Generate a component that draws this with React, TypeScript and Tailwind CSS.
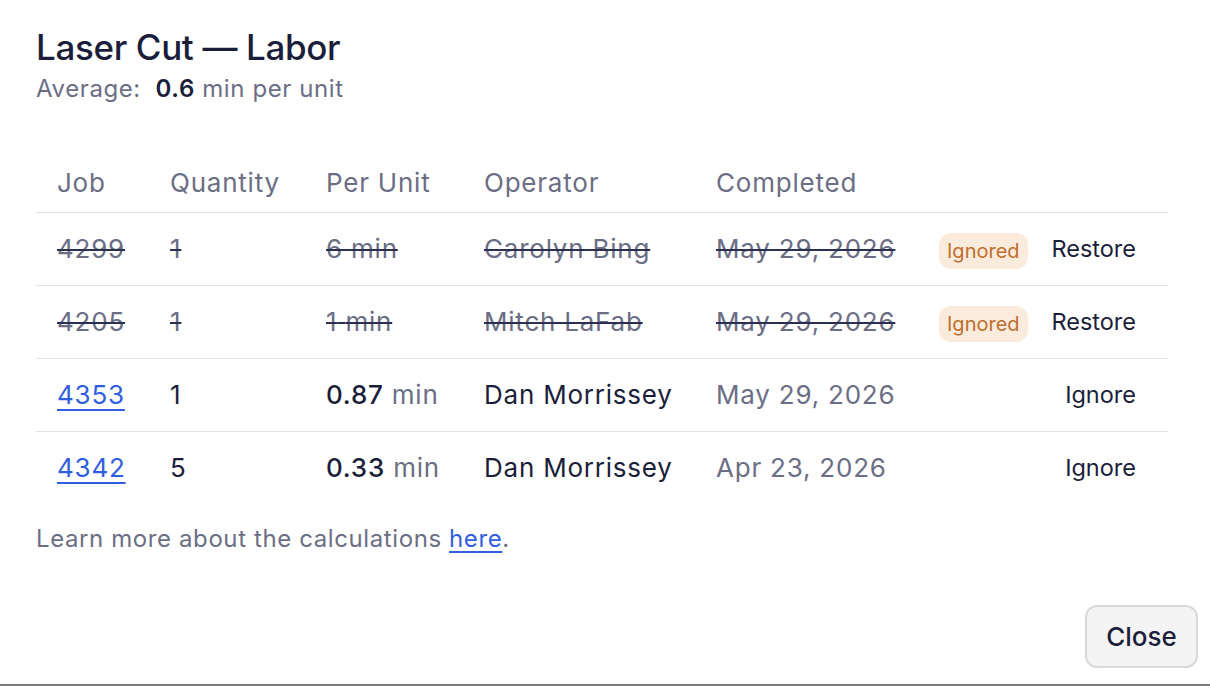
import React from "react";

type Row = {
  job: string;
  qty: string;
  perUnit: string;
  unit: string;
  operator: string;
  completed: string;
  ignored: boolean;
};

const rows: Row[] = [
  { job: "4299", qty: "1", perUnit: "6", unit: "min", operator: "Carolyn Bing", completed: "May 29, 2026", ignored: true },
  { job: "4205", qty: "1", perUnit: "1", unit: "min", operator: "Mitch LaFab", completed: "May 29, 2026", ignored: true },
  { job: "4353", qty: "1", perUnit: "0.87", unit: "min", operator: "Dan Morrissey", completed: "May 29, 2026", ignored: false },
  { job: "4342", qty: "5", perUnit: "0.33", unit: "min", operator: "Dan Morrissey", completed: "Apr 23, 2026", ignored: false },
];

const strike = "line-through decoration-[#2b3050] decoration-2 text-[#6b6e85]";

function App() {
  return (
    <div className="w-[1210px] h-[686px] bg-white border-b-2 border-[#7a7a7a] font-['Inter','Noto_Sans',sans-serif] text-[#1b1e3a] flex flex-col">
      <div className="px-9 pt-[25px]">
        <h1 className="text-[35px] font-medium leading-[44px] tracking-[-0.01em]">Laser Cut — Labor</h1>
        <p className="mt-[4px] text-[24px] leading-[32px] text-[#6b6e85] tracking-[0.025em]">
          Average:&nbsp; <span className="font-semibold text-[#1b1e3a]">0.6</span> min per unit
        </p>

        <table className="mt-[49px] w-[1132px] table-fixed border-collapse text-[26px] tracking-[0.03em]">
          <thead>
            <tr className="text-left text-[#6b6e85] h-[58px]">
              <th className="w-[113px] pl-[21px] font-normal">Job</th>
              <th className="w-[156px] pl-[21px] font-normal">Quantity</th>
              <th className="w-[158px] pl-[21px] font-normal">Per Unit</th>
              <th className="w-[232px] pl-[21px] font-normal">Operator</th>
              <th className="w-[223px] pl-[21px] font-normal">Completed</th>
              <th className="w-[114px] pl-[21px] font-normal"></th>
              <th className="font-normal"></th>
            </tr>
          </thead>
          <tbody>
            {rows.map((r) => (
              <tr key={r.job} className="h-[73px] border-t border-[#e3e3e6]">
                <td className="pl-[21px]">
                  {r.ignored ? (
                    <span className={strike}>{r.job}</span>
                  ) : (
                    <a href="#" className="text-[#2f5fe0] underline underline-offset-[5px] decoration-2">{r.job}</a>
                  )}
                </td>
                <td className="pl-[21px]">{r.ignored ? <span className={strike}>{r.qty}</span> : r.qty}</td>
                <td className="pl-[21px]">
                  {r.ignored ? (
                    <span className={strike}>
                      {r.perUnit} {r.unit}
                    </span>
                  ) : (
                    <span>
                      <span className="font-medium">{r.perUnit}</span>{" "}
                      <span className="text-[#6b6e85]">{r.unit}</span>
                    </span>
                  )}
                </td>
                <td className="pl-[21px]">{r.ignored ? <span className={strike}>{r.operator}</span> : r.operator}</td>
                <td className="pl-[21px]">
                  <span className={r.ignored ? strike : "text-[#6b6e85]"}>{r.completed}</span>
                </td>
                <td className="pl-[21px]">
                  {r.ignored && (
                    <span className="inline-flex items-center h-[36px] px-[8px] rounded-[12px] bg-[#fbebdc] text-[#bf6e2c] text-[20px] tracking-normal">
                      Ignored
                    </span>
                  )}
                </td>
                <td className="text-right pr-[32px] text-[23.5px] tracking-normal">
                  <button className="text-[#1b1e3a]">{r.ignored ? "Restore" : "Ignore"}</button>
                </td>
              </tr>
            ))}
          </tbody>
        </table>

        <p className="mt-[20px] text-[24px] leading-[30px] text-[#6b6e85] tracking-[0.025em]">
          Learn more about the calculations{" "}
          <a href="#" className="text-[#2f5fe0] underline underline-offset-[4px] decoration-2">here</a>.
        </p>
      </div>

      <div className="mt-auto flex justify-end pr-[12px] pb-[16px]">
        <button className="w-[113px] h-[63px] rounded-[12px] border-2 border-[#d9d9dc] bg-[#f4f4f5] text-[26px] font-medium text-[#1b1e3a]">
          Close
        </button>
      </div>
    </div>
  );
}

export default App;
